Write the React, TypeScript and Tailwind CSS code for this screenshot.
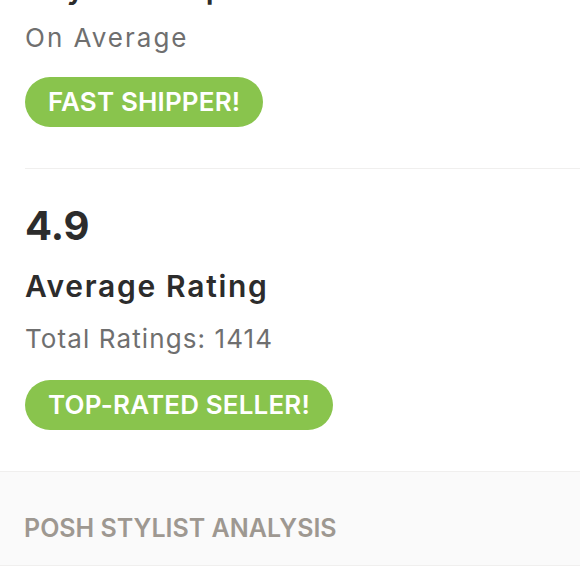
import React from 'react';

const Badge: React.FC<{ label: string }> = ({ label }) => (
  <span className="inline-flex h-[50px] items-center rounded-full bg-[#89c44d] px-[23px] text-[26px] font-semibold leading-none tracking-[0.15px] text-white">
    {label}
  </span>
);

const App: React.FC = () => {
  return (
    <div className="h-[580px] w-[580px] overflow-hidden bg-white font-['Inter','Liberation_Sans',sans-serif]">
      {/* shipping stats, scrolled so the title sits above the fold */}
      <section className="-mt-[31px] pl-[25px]">
        <div className="pb-[41px]">
          <h3 className="text-[30px] font-semibold leading-[38px] tracking-[1.7px] text-[#2c2c2c]">Days to Ship</h3>
          <p className="mt-[15px] text-[26px] leading-[32px] tracking-[2px] text-[#6f6f6f]">On Average</p>
          <div className="mt-[23px]">
            <Badge label="FAST SHIPPER!" />
          </div>
        </div>

        <div className="border-t border-[#f0efee] pb-[41px]">
          <p className="mt-[33px] text-[40px] font-bold leading-[48px] text-[#2c2c2c]">4.9</p>
          <h3 className="mt-[18px] text-[30px] font-semibold leading-[36px] tracking-[1.7px] text-[#2c2c2c]">Average Rating</h3>
          <p className="mt-[19px] text-[26px] leading-[32px] tracking-[1.1px] text-[#6f6f6f]">Total Ratings: 1414</p>
          <div className="mt-[25px]">
            <Badge label="TOP-RATED SELLER!" />
          </div>
        </div>
      </section>

      <section className="border-y border-[#f0efee] bg-[#fafafa] pb-[20px] pl-[24px] pt-[39px]">
        <h2 className="text-[25px] font-semibold leading-[34px] text-[#9e9891]">POSH STYLIST ANALYSIS</h2>
      </section>
    </div>
  );
};

export default App;
